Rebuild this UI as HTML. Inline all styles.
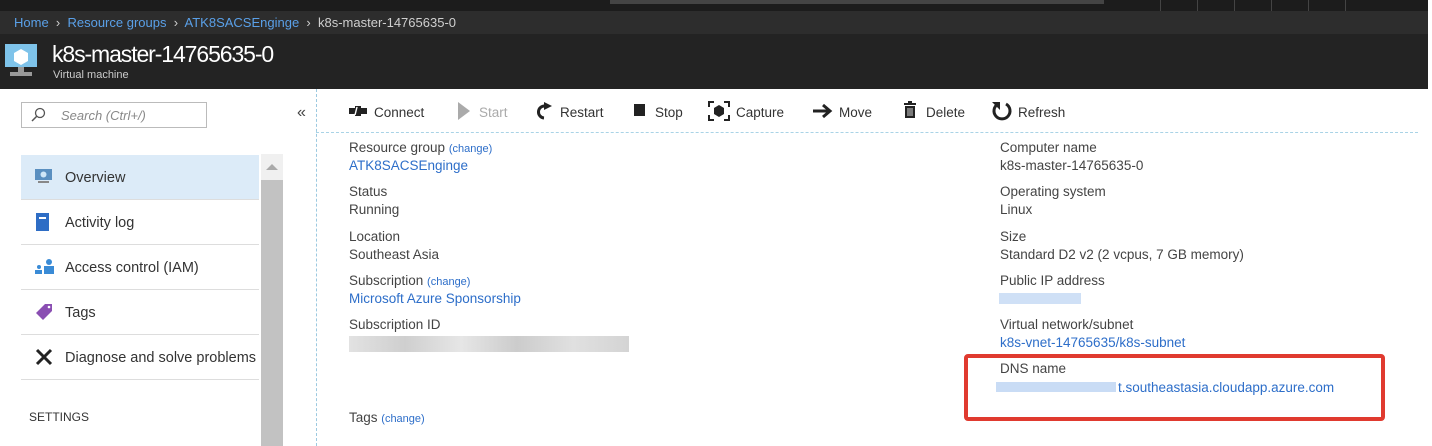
<!DOCTYPE html>
<html><head><meta charset="utf-8"><style>
*{margin:0;padding:0;box-sizing:border-box}
body{width:1432px;height:446px;background:#fff;font-family:"Liberation Sans",sans-serif;position:relative;overflow:hidden;color:#333}
.a{position:absolute;white-space:nowrap}
.l{color:#444;font-size:13.5px}
.v{color:#444;font-size:13.5px}
.lk{color:#2d6ec9;font-size:13.5px}
.ch{color:#2d6ec9;font-size:11px}
.tb{font-size:13.5px;color:#333}
.mi{position:absolute;left:21px;width:238px;height:45px;border-bottom:1px solid #ddd;font-size:14.5px;color:#333}
.mi span{position:absolute;left:44px;top:15px}
.mi i{position:absolute;left:13px;top:13px}
.blur{position:absolute;background:#d8d8d8}
</style></head><body>
<div class="a" style="left:0;top:0;width:1428px;height:11px;background:#1c1c1c"></div>
<div class="a" style="left:610px;top:0;width:494px;height:4px;background:#444"></div>
<div class="a" style="left:1160px;top:0;width:1px;height:11px;background:#444"></div>
<div class="a" style="left:1197px;top:0;width:1px;height:11px;background:#444"></div>
<div class="a" style="left:1234px;top:0;width:1px;height:11px;background:#444"></div>
<div class="a" style="left:1271px;top:0;width:1px;height:11px;background:#444"></div>
<div class="a" style="left:1308px;top:0;width:1px;height:11px;background:#444"></div>
<div class="a" style="left:1345px;top:0;width:1px;height:11px;background:#444"></div>
<div class="a" style="left:0;top:11px;width:1428px;height:23px;background:#2d2d2d"></div>
<div class="a" style="left:14px;top:15px;font-size:13px;color:#cfcfcf"><span style="color:#5aa0e8">Home</span> &nbsp;›&nbsp; <span style="color:#5aa0e8">Resource groups</span> &nbsp;›&nbsp; <span style="color:#5aa0e8">ATK8SACSEnginge</span> &nbsp;›&nbsp; k8s-master-14765635-0</div>
<div class="a" style="left:0;top:34px;width:1428px;height:55px;background:#232323"></div>
<svg class="a" style="left:4px;top:42px" width="36" height="38" viewBox="0 0 36 38"><rect x="1" y="2" width="32" height="23" fill="#7ec3ea"/><path d="M17 7l7 4v8l-7 4-7-4v-8z" fill="#fff"/><rect x="14" y="25" width="6" height="5" fill="#999"/><rect x="6" y="30" width="22" height="4" fill="#999"/></svg>
<div class="a" style="left:52px;top:41px;font-size:23px;color:#fff;letter-spacing:-1.1px">k8s-master-14765635-0</div>
<div class="a" style="left:53px;top:69px;font-size:11px;color:#ccc">Virtual machine</div>
<div class="a" style="left:21px;top:102px;width:186px;height:26px;border:1px solid #bbb"></div>
<svg class="a" style="left:30px;top:107px" width="16" height="16"><circle cx="10" cy="6" r="4.5" fill="none" stroke="#555" stroke-width="1.3"/><path d="M7 9L2 14" stroke="#555" stroke-width="1.5"/></svg>
<div class="a" style="left:61px;top:108px;font-size:13px;font-style:italic;color:#888">Search (Ctrl+/)</div>
<div class="a" style="left:297px;top:104px;font-size:16px;color:#444">«</div>
<div class="a" style="left:316px;top:89px;width:0;height:357px;border-left:1px dashed #9cc9e0"></div>
<div class="mi" style="top:155px;background:#dcebf8"><i><svg width="20" height="18"><rect x="1" y="1" width="17" height="11" fill="#5a8fc0"/><circle cx="9.5" cy="6.5" r="3" fill="#cfe6f7"/><rect x="4" y="13" width="11" height="2" fill="#888"/></svg></i><span>Overview</span></div>
<div class="mi" style="top:200px"><i><svg width="18" height="20"><rect x="2" y="0" width="13" height="18" fill="#2e6dc5"/><rect x="5" y="4" width="7" height="2" fill="#fff"/></svg></i><span>Activity log</span></div>
<div class="mi" style="top:245px"><i><svg width="22" height="18"><circle cx="15" cy="4" r="3" fill="#3a8bd6"/><rect x="10" y="8" width="10" height="8" fill="#3a8bd6"/><circle cx="5" cy="9" r="2" fill="#3a8bd6"/><rect x="1" y="12" width="7" height="4" fill="#3a8bd6"/></svg></i><span>Access control (IAM)</span></div>
<div class="mi" style="top:290px"><i><svg width="20" height="18"><path d="M2 10L11 1h7v7l-9 9z" fill="#8a4eb2"/><circle cx="15" cy="4" r="1.3" fill="#fff"/></svg></i><span>Tags</span></div>
<div class="mi" style="top:335px"><i><svg width="20" height="18"><path d="M3 2l14 14M17 2L3 16" stroke="#222" stroke-width="3"/></svg></i><span>Diagnose and solve problems</span></div>
<div class="a" style="left:29px;top:410px;font-size:12px;color:#333">SETTINGS</div>
<div class="a" style="left:261px;top:154px;width:22px;height:292px;background:#c2c2c2"></div>
<div class="a" style="left:261px;top:154px;width:22px;height:26px;background:#f0f0f0"></div>
<div class="a" style="left:266px;top:164px;width:0;height:0;border-left:6px solid transparent;border-right:6px solid transparent;border-bottom:6px solid #aaa"></div>
<svg class="a" style="left:348px;top:104px" width="20" height="14"><path d="M1 4h6v-2h6v2h6v6h-6v2h-6v-2h-6z" fill="#222"/><path d="M9 3l-2 8" stroke="#fff" stroke-width="1.4"/></svg>
<div class="a tb" style="left:374px;top:105px">Connect</div>
<svg class="a" style="left:457px;top:101px" width="14" height="20"><path d="M1 1l12 9-12 9z" fill="#aaa"/></svg>
<div class="a tb" style="left:479px;top:105px;color:#aaa">Start</div>
<svg class="a" style="left:535px;top:100px" width="18" height="22"><path d="M12 6a6 6 0 1 0 -1 12" fill="none" stroke="#222" stroke-width="3" transform="translate(-2,0)"/><path d="M9 2l8 4-8 4z" fill="#222"/></svg>
<div class="a tb" style="left:560px;top:105px">Restart</div>
<div class="a" style="left:634px;top:104px;width:11px;height:12px;background:#222"></div>
<div class="a tb" style="left:655px;top:105px">Stop</div>
<svg class="a" style="left:708px;top:101px" width="22" height="20"><path d="M1 6V1h5M16 1h5v5M21 14v5h-5M6 19H1v-5" fill="none" stroke="#222" stroke-width="2"/><path d="M11 4l5 3v6l-5 3-5-3v-6z" fill="#222"/></svg>
<div class="a tb" style="left:736px;top:105px">Capture</div>
<svg class="a" style="left:812px;top:103px" width="22" height="16"><path d="M1 8h16M11 2l7 6-7 6" fill="none" stroke="#222" stroke-width="3"/></svg>
<div class="a tb" style="left:839px;top:105px">Move</div>
<svg class="a" style="left:903px;top:101px" width="14" height="18"><rect x="1" y="2" width="12" height="2" fill="#222"/><rect x="5" y="0" width="4" height="2" fill="#222"/><rect x="2" y="5" width="10" height="12" fill="#222"/><path d="M5 7v8M7 7v8M9 7v8" stroke="#fff" stroke-width="0.8"/></svg>
<div class="a tb" style="left:926px;top:105px">Delete</div>
<svg class="a" style="left:991px;top:99px" width="22" height="22"><path d="M7 5a8 8 0 1 0 8 0" fill="none" stroke="#222" stroke-width="3"/><path d="M1 3h8v8z" fill="#222"/></svg>
<div class="a tb" style="left:1018px;top:105px">Refresh</div>
<div class="a" style="left:316px;top:132px;width:1102px;height:0;border-top:1px dashed #a9d3e6"></div>
<div class="a l" style="left:349px;top:140px">Resource group <span class="ch">(change)</span></div>
<div class="a lk" style="left:349px;top:158px">ATK8SACSEnginge</div>
<div class="a l" style="left:349px;top:184px">Status</div>
<div class="a v" style="left:349px;top:202px">Running</div>
<div class="a l" style="left:349px;top:229px">Location</div>
<div class="a v" style="left:349px;top:247px">Southeast Asia</div>
<div class="a l" style="left:349px;top:273px">Subscription <span class="ch">(change)</span></div>
<div class="a lk" style="left:349px;top:291px">Microsoft Azure Sponsorship</div>
<div class="a l" style="left:349px;top:317px">Subscription ID</div>
<div class="blur" style="left:349px;top:336px;width:280px;height:16px;background:linear-gradient(90deg,#e2e2e2,#cfcfcf 20%,#e6e6e6 40%,#cccccc 60%,#e0e0e0 80%,#d4d4d4)"></div>
<div class="a l" style="left:349px;top:410px">Tags <span class="ch">(change)</span></div>
<div class="a l" style="left:1000px;top:140px">Computer name</div>
<div class="a v" style="left:1000px;top:158px">k8s-master-14765635-0</div>
<div class="a l" style="left:1000px;top:184px">Operating system</div>
<div class="a v" style="left:1000px;top:202px">Linux</div>
<div class="a l" style="left:1000px;top:229px">Size</div>
<div class="a v" style="left:1000px;top:247px">Standard D2 v2 (2 vcpus, 7 GB memory)</div>
<div class="a l" style="left:1000px;top:273px">Public IP address</div>
<div class="blur" style="left:999px;top:293px;width:82px;height:11px;background:#cfe0f6"></div>
<div class="a l" style="left:1000px;top:317px">Virtual network/subnet</div>
<div class="a lk" style="left:1000px;top:335px">k8s-vnet-14765635/k8s-subnet</div>
<div class="a l" style="left:1000px;top:361px">DNS name</div>
<div class="blur" style="left:996px;top:382px;width:120px;height:10px;background:#c9dcf5"></div>
<div class="a lk" style="left:1118px;top:380px">t.southeastasia.cloudapp.azure.com</div>
<div class="a" style="left:964px;top:354px;width:421px;height:67px;border:4px solid #e03a2f;border-radius:4px"></div>
</body></html>
